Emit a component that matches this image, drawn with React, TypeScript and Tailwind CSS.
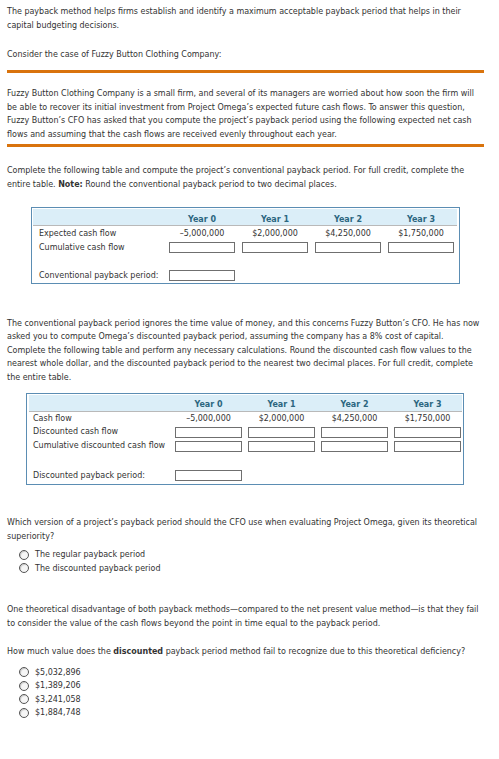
import React from "react";

const Line = ({ children }: { children: React.ReactNode }) => (
  <div className="whitespace-nowrap">{children}</div>
);

const Input = ({ w = "w-[66px]" }: { w?: string }) => (
  <div className={`${w} h-[11px] border border-[#6f6f6f] bg-white`} />
);

const Radio = ({ label }: { label: string }) => (
  <div className="flex items-center h-[13.5px] whitespace-nowrap">
    <div className="ml-[12px] w-[10px] h-[10px] rounded-full border border-[#555] bg-[#f6f6f6] shadow-[inset_1px_1px_1px_rgba(0,0,0,0.18)]" />
    <span className="ml-[6px]">{label}</span>
  </div>
);

const T1 = "grid grid-cols-[129px_66px_66px_66px_66px] gap-x-[7px]";
const T2 = "grid grid-cols-[140px_67px_67px_67px_67px] gap-x-[6px]";

export default function App() {
  return (
    <div className="w-[499px] min-h-[759px] bg-white text-[#333] font-['DejaVu_Sans_Condensed','DejaVu_Sans',sans-serif] text-[8.9px] leading-[13.5px] pl-[7px] pt-[5px]">
      <div>
        <Line>
          The payback method helps firms establish and identify a maximum acceptable payback period that helps in their
        </Line>
        <Line>capital budgeting decisions.</Line>
      </div>

      <div className="mt-[16px]">
        <Line>Consider the case of Fuzzy Button Clothing Company:</Line>
      </div>

      <div className="mt-[8.5px] w-[477px] h-[3px] bg-[#d9730d]" />

      <div className="mt-[14px]">
        <Line>
          Fuzzy Button Clothing Company is a small firm, and several of its managers are worried about how soon the firm will
        </Line>
        <Line>
          be able to recover its initial investment from Project Omega’s expected future cash flows. To answer this question,
        </Line>
        <Line>
          Fuzzy Button’s CFO has asked that you compute the project’s payback period using the following expected net cash
        </Line>
        <Line>flows and assuming that the cash flows are received evenly throughout each year.</Line>
      </div>

      <div className="mt-[3px] w-[477px] h-[3px] bg-[#d9730d]" />

      <div className="mt-[17px]">
        <Line>
          Complete the following table and compute the project’s conventional payback period. For full credit, complete the
        </Line>
        <Line>
          entire table. <b className="font-bold">Note:</b> Round the conventional payback period to two decimal places.
        </Line>
      </div>

      {/* Table 1 */}
      <div className="mt-[16px] ml-[24px] w-[429px] border border-[#5b8db3] pl-[1px] pr-[2px] pt-[1px]">
        <div className={`${T1} h-[17px] pt-[4px] items-center bg-[#dbeef8] border-b border-[#b9b9b9] font-bold text-[#2b6680]`}>
          <div />
          <div className="text-center">Year 0</div>
          <div className="text-center">Year 1</div>
          <div className="text-center">Year 2</div>
          <div className="text-center">Year 3</div>
        </div>
        <div className={`${T1} h-[15px] items-center`}>
          <div className="pl-[6px] whitespace-nowrap">Expected cash flow</div>
          <div className="text-center">–5,000,000</div>
          <div className="text-center">$2,000,000</div>
          <div className="text-center">$4,250,000</div>
          <div className="text-center">$1,750,000</div>
        </div>
        <div className={`${T1} h-[12px] items-center`}>
          <div className="pl-[6px] whitespace-nowrap">Cumulative cash flow</div>
          <Input />
          <Input />
          <Input />
          <Input />
        </div>
        <div className="h-[15px]" />
        <div className={`${T1} h-[15px] items-center`}>
          <div className="pl-[6px] whitespace-nowrap">Conventional payback period:</div>
          <Input />
        </div>
      </div>

      <div className="mt-[32.5px]">
        <Line>
          The conventional payback period ignores the time value of money, and this concerns Fuzzy Button’s CFO. He has now
        </Line>
        <Line>
          asked you to compute Omega’s discounted payback period, assuming the company has a 8% cost of capital.
        </Line>
        <Line>
          Complete the following table and perform any necessary calculations. Round the discounted cash flow values to the
        </Line>
        <Line>
          nearest whole dollar, and the discounted payback period to the nearest two decimal places. For full credit, complete
        </Line>
        <Line>the entire table.</Line>
      </div>

      {/* Table 2 */}
      <div className="mt-[9px] ml-[19px] w-[438px] border border-[#5b8db3] pl-[2px] pr-[1px] pt-[1px] pb-[1px]">
        <div className={`${T2} h-[17px] pt-[3px] items-center bg-[#dbeef8] border-b border-[#b9b9b9] font-bold text-[#2b6680]`}>
          <div />
          <div className="text-center">Year 0</div>
          <div className="text-center">Year 1</div>
          <div className="text-center">Year 2</div>
          <div className="text-center">Year 3</div>
        </div>
        <div className={`${T2} h-[13px] items-center`}>
          <div className="pl-[4px] whitespace-nowrap">Cash flow</div>
          <div className="text-center">–5,000,000</div>
          <div className="text-center">$2,000,000</div>
          <div className="text-center">$4,250,000</div>
          <div className="text-center">$1,750,000</div>
        </div>
        <div className={`${T2} h-[14px] items-center`}>
          <div className="pl-[4px] whitespace-nowrap">Discounted cash flow</div>
          <Input w="w-[67px]" />
          <Input w="w-[67px]" />
          <Input w="w-[67px]" />
          <Input w="w-[67px]" />
        </div>
        <div className={`${T2} h-[14px] items-center`}>
          <div className="pl-[4px] whitespace-nowrap">Cumulative discounted cash flow</div>
          <Input w="w-[67px]" />
          <Input w="w-[67px]" />
          <Input w="w-[67px]" />
          <Input w="w-[67px]" />
        </div>
        <div className="h-[15px]" />
        <div className={`${T2} h-[15px] items-center`}>
          <div className="pl-[4px] whitespace-nowrap">Discounted payback period:</div>
          <Input w="w-[67px]" />
        </div>
      </div>

      <div className="mt-[31px]">
        <Line>
          Which version of a project’s payback period should the CFO use when evaluating Project Omega, given its theoretical
        </Line>
        <Line>superiority?</Line>
      </div>

      <div className="mt-[5px]">
        <Radio label="The regular payback period" />
        <Radio label="The discounted payback period" />
      </div>

      <div className="mt-[28px]">
        <Line>
          One theoretical disadvantage of both payback methods—compared to the net present value method—is that they fail
        </Line>
        <Line>
          to consider the value of the cash flows beyond the point in time equal to the payback period.
        </Line>
      </div>

      <div className="mt-[15px]">
        <Line>
          How much value does the <b className="font-bold">discounted</b> payback period method fail to recognize due to this theoretical deficiency?
        </Line>
      </div>

      <div className="mt-[7px]">
        <Radio label="$5,032,896" />
        <Radio label="$1,389,206" />
        <Radio label="$3,241,058" />
        <Radio label="$1,884,748" />
      </div>
    </div>
  );
}
